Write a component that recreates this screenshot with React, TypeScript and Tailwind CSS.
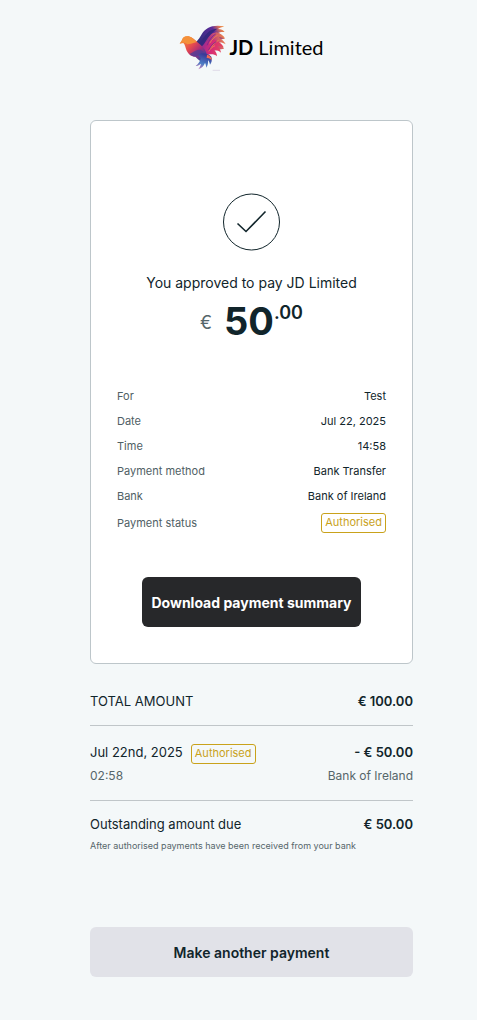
import React from 'react';

interface DetailRowProps {
  label: string;
  children: React.ReactNode;
}

const details = [
  { label: 'For', value: 'Test' },
  { label: 'Date', value: 'Jul 22, 2025' },
  { label: 'Time', value: '14:58' },
  { label: 'Payment method', value: 'Bank Transfer' },
  { label: 'Bank', value: 'Bank of Ireland' },
];

const BirdLogo: React.FC = () => (
  <svg className="w-12 h-12 shrink-0" viewBox="12 12 144 144" fill="none" aria-hidden="true">
    <defs>
      <linearGradient id="wingTop" x1="70" y1="60" x2="150" y2="20" gradientUnits="userSpaceOnUse">
        <stop offset="0" stopColor="#33307f" />
        <stop offset="0.6" stopColor="#5b2a9a" />
        <stop offset="0.8" stopColor="#d8705a" />
        <stop offset="1" stopColor="#f9a03c" />
      </linearGradient>
      <linearGradient id="wingMid" x1="75" y1="75" x2="150" y2="50" gradientUnits="userSpaceOnUse">
        <stop offset="0" stopColor="#5a2a94" />
        <stop offset="0.5" stopColor="#b63a80" />
        <stop offset="1" stopColor="#f28a4a" />
      </linearGradient>
      <linearGradient id="wingLow" x1="70" y1="80" x2="140" y2="95" gradientUnits="userSpaceOnUse">
        <stop offset="0" stopColor="#7a2f9c" />
        <stop offset="0.5" stopColor="#d4297a" />
        <stop offset="1" stopColor="#e8455c" />
      </linearGradient>
      <linearGradient id="body" x1="28" y1="55" x2="85" y2="112" gradientUnits="userSpaceOnUse">
        <stop offset="0" stopColor="#f58a35" />
        <stop offset="0.4" stopColor="#e4484f" />
        <stop offset="0.7" stopColor="#a42a7c" />
        <stop offset="1" stopColor="#35479f" />
      </linearGradient>
      <linearGradient id="tail" x1="88" y1="104" x2="72" y2="146" gradientUnits="userSpaceOnUse">
        <stop offset="0" stopColor="#3a3a98" />
        <stop offset="0.6" stopColor="#4a7cc4" />
        <stop offset="1" stopColor="#c078b8" />
      </linearGradient>
    </defs>
    <path fill="url(#wingTop)" d="M60 68C70 61 76 50 81 41C92 24 112 12 148 19C140 22 134 24 129 27C138 27 145 31 149 36C140 35 134 36 129 39C138 43 145 49 149 56L112 62L70 90Z" />
    <path fill="url(#wingMid)" d="M66 78C81 60 100 40 124 37C136 40 147 48 150 56C143 52 137 51 132 53C141 58 149 65 152 73C144 67 137 67 130 68C138 73 144 79 147 86L105 94L78 98Z" />
    <path fill="url(#wingLow)" d="M70 88C85 68 101 57 119 60C131 64 142 73 146 82C139 79 132 78 127 79C133 84 137 91 138 98C131 92 124 90 118 91C123 96 126 102 126 109C119 103 110 102 101 104L82 106Z" />
    <path fill="#35287f" d="M63 76C78 67 84 52 98 38C107 29 117 26 127 26C112 36 103 47 93 62C85 76 77 84 69 88Z" />
    <path stroke="#f08a4c" strokeWidth="2.5" d="M104 70C111 58 119 50 128 46M108 83C114 73 122 66 131 61M101 94C106 86 113 80 120 77" />
    <path stroke="#7a2590" strokeWidth="2.5" d="M96 76C102 61 110 49 122 42M100 91C106 79 114 70 124 65" />
    <path fill="url(#body)" d="M14 71L20 62C23 51 31 47 41 49C52 52 59 60 69 68C79 75 88 84 94 98C96 109 91 119 84 124C73 124 67 116 61 110C49 110 41 103 35 92C31 84 31 74 25 69Z" />
    <path fill="#f4913a" d="M14 71L20 62C23 51 31 47 41 49C52 52 57 59 66 66C55 68 45 73 37 73C30 67 22 65 14 71Z" />
    <path fill="#4a3f98" fillOpacity="0.75" d="M44 102C56 94 66 88 77 89C87 94 91 103 89 114C80 106 70 104 61 110C53 109 48 107 44 102Z" />
    <path fill="url(#tail)" d="M70 104C85 95 100 101 109 110C112 119 110 128 105 134C104 128 102 124 99 121C100 129 98 137 94 143C93 137 92 132 90 129C87 138 79 145 70 148C74 142 77 136 78 131C72 136 67 138 62 138C70 131 77 124 77 114Z" />
    <path fill="#ef6b55" d="M96 104C105 106 110 112 111 121C107 116 101 113 95 114Z" />
    <path stroke="#d5cbe0" strokeWidth="2" d="M113 151H135" />
  </svg>
);

const StatusBadge: React.FC = () => (
  <span className="inline-block h-5 rounded-[3px] border border-[#c9a21b] px-[3px] text-[11px] leading-4 text-[#c9a21b]">
    Authorised
  </span>
);

const DetailRow: React.FC<DetailRowProps> = ({ label, children }) => (
  <div className="flex min-h-[25px] items-center justify-between">
    <dt className="text-[#4f6064]">{label}</dt>
    <dd className="flex">{children}</dd>
  </div>
);

const App: React.FC = () => {
  return (
    <div className="min-h-screen bg-[#f4f8f9] pt-6 pr-16 pb-11 pl-[90px] font-['Inter',sans-serif] text-[#11252b]">
      <header className="flex items-center justify-center gap-[2px]">
        <BirdLogo />
        <span className="pb-[2px] font-['Lato',sans-serif] text-[20px] leading-6 whitespace-nowrap text-black">
          <b className="font-bold">JD</b> Limited
        </span>
      </header>

      <main className="mt-12">
        <section className="flex flex-col rounded-[6px] border border-[#bdc6ca] bg-white px-[26px] pt-[72px] pb-9">
          <svg className="h-[58px] w-[58px] self-center" viewBox="0 0 58 58" fill="none" stroke="#11252b" aria-hidden="true">
            <circle cx="28.5" cy="29" r="28" strokeWidth="1" />
            <path d="M14.5 30.5L23 38.5L42.5 18.5" strokeWidth="1.6" />
          </svg>
          <h1 className="mt-5 text-center text-[14px] leading-6">You approved to pay JD Limited</h1>
          <p className="mt-[6px] flex items-start justify-center leading-10">
            <span className="mr-3 pt-[2px] text-[18px] text-[#56666a]">€</span>
            <span className="text-[38px] font-bold">50</span>
            <span className="text-[18px] leading-6 font-semibold">.00</span>
          </p>

          <dl className="mt-10 text-[11px] leading-4">
            {details.map(({ label, value }) => (
              <DetailRow key={label} label={label}>{value}</DetailRow>
            ))}
            <div className="pt-[2px]">
              <DetailRow label="Payment status"><StatusBadge /></DetailRow>
            </div>
          </dl>

          <button
            type="button"
            className="mt-[42px] h-[50px] self-center rounded-[6px] bg-[#27282a] px-[9px] text-[14px] font-bold whitespace-nowrap text-white"
          >
            Download payment summary
          </button>
        </section>

        <section className="mt-[27px] text-[13px] leading-5">
          <div className="flex justify-between border-b border-[#c0c6c9] pb-[14px]">
            <span>TOTAL AMOUNT</span>
            <span className="font-semibold">€ 100.00</span>
          </div>
          <div className="border-b border-[#c0c6c9] pt-4 pb-[14px]">
            <div className="flex justify-between">
              <div className="flex items-baseline gap-2">
                <span>Jul 22nd, 2025</span>
                <StatusBadge />
              </div>
              <span className="font-semibold">- € 50.00</span>
            </div>
            <div className="mt-[2px] flex justify-between text-[12px] text-[#56666a]">
              <span>02:58</span>
              <span>Bank of Ireland</span>
            </div>
          </div>
          <div className="flex justify-between pt-[13px]">
            <span>Outstanding amount due</span>
            <span className="font-semibold">€ 50.00</span>
          </div>
          <p className="mt-1 text-[9px] leading-4 text-[#56666a]">
            After authorised payments have been received from your bank
          </p>
        </section>

        <button
          type="button"
          className="mt-[73px] h-[50px] w-full rounded-[6px] bg-[#e1e2e8] text-[14px] font-semibold"
        >
          Make another payment
        </button>
      </main>
    </div>
  );
};

export default App;
